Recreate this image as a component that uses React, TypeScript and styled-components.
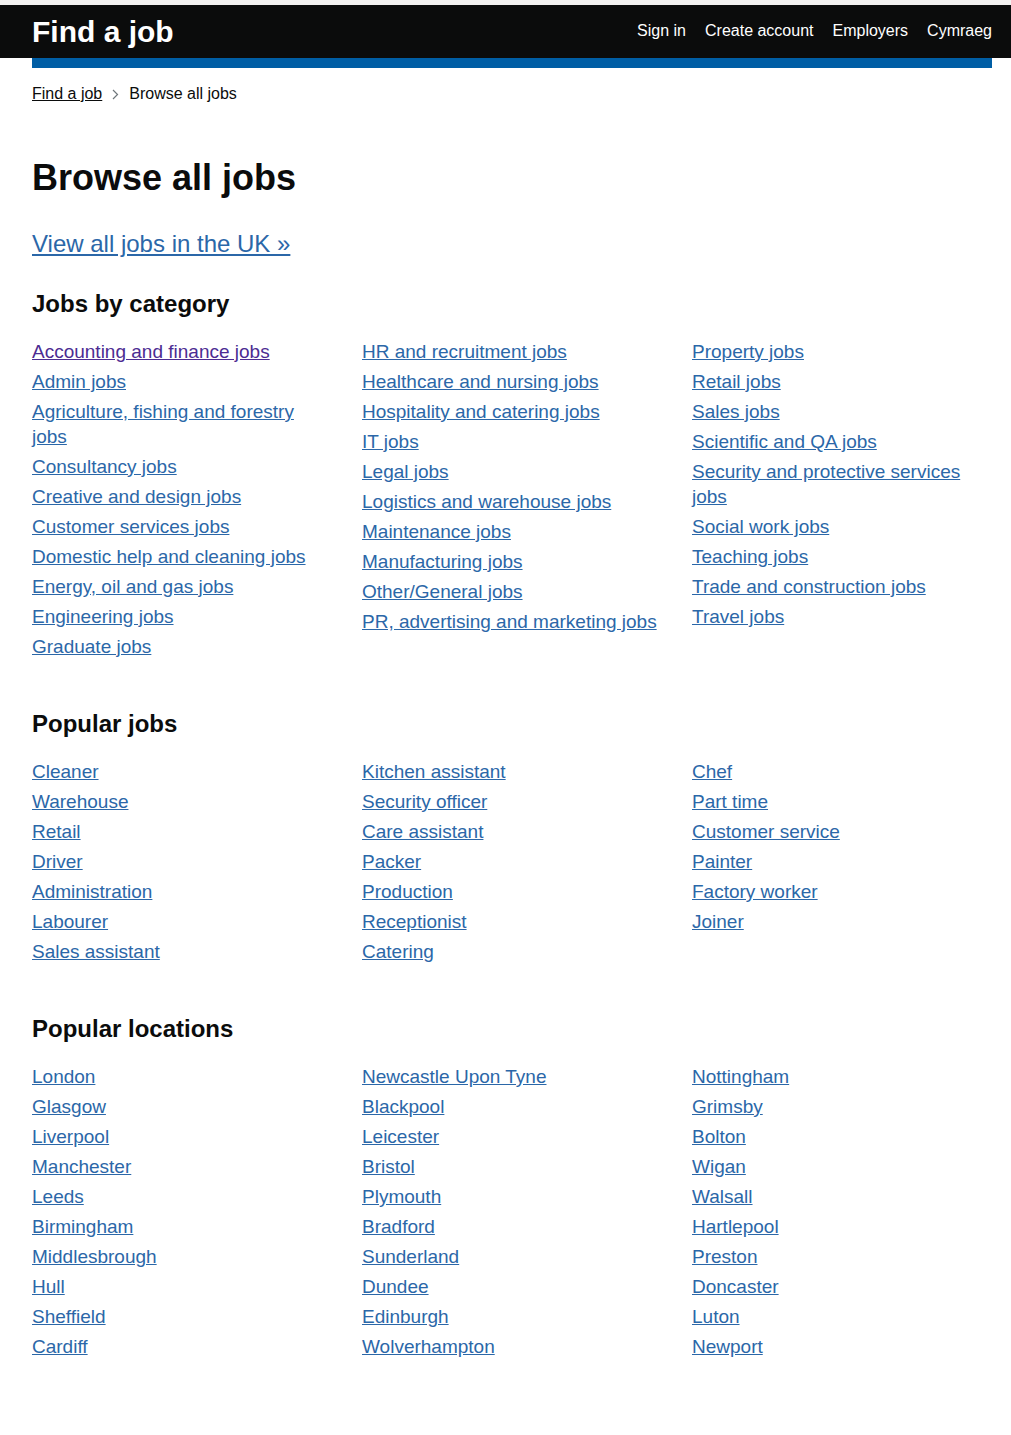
import React from 'react';
import styled, { createGlobalStyle } from 'styled-components';

const categories = [
  [
    'Accounting and finance jobs',
    'Admin jobs',
    'Agriculture, fishing and forestry jobs',
    'Consultancy jobs',
    'Creative and design jobs',
    'Customer services jobs',
    'Domestic help and cleaning jobs',
    'Energy, oil and gas jobs',
    'Engineering jobs',
    'Graduate jobs',
  ],
  [
    'HR and recruitment jobs',
    'Healthcare and nursing jobs',
    'Hospitality and catering jobs',
    'IT jobs',
    'Legal jobs',
    'Logistics and warehouse jobs',
    'Maintenance jobs',
    'Manufacturing jobs',
    'Other/General jobs',
    'PR, advertising and marketing jobs',
  ],
  [
    'Property jobs',
    'Retail jobs',
    'Sales jobs',
    'Scientific and QA jobs',
    'Security and protective services jobs',
    'Social work jobs',
    'Teaching jobs',
    'Trade and construction jobs',
    'Travel jobs',
  ],
];

const popularJobs = [
  ['Cleaner', 'Warehouse', 'Retail', 'Driver', 'Administration', 'Labourer', 'Sales assistant'],
  ['Kitchen assistant', 'Security officer', 'Care assistant', 'Packer', 'Production', 'Receptionist', 'Catering'],
  ['Chef', 'Part time', 'Customer service', 'Painter', 'Factory worker', 'Joiner'],
];

const locations = [
  ['London', 'Glasgow', 'Liverpool', 'Manchester', 'Leeds', 'Birmingham', 'Middlesbrough', 'Hull', 'Sheffield', 'Cardiff'],
  ['Newcastle Upon Tyne', 'Blackpool', 'Leicester', 'Bristol', 'Plymouth', 'Bradford', 'Sunderland', 'Dundee', 'Edinburgh', 'Wolverhampton'],
  ['Nottingham', 'Grimsby', 'Bolton', 'Wigan', 'Walsall', 'Hartlepool', 'Preston', 'Doncaster', 'Luton', 'Newport'],
];

const visited = ['Accounting and finance jobs'];

const LinkSection = ({ title, columns }: { title: string; columns: string[][] }) => (
  <Section>
    <SectionTitle>{title}</SectionTitle>
    <Columns>
      {columns.map((col, i) => (
        <List key={i}>
          {col.map((item) => (
            <Item key={item}>
              <ListLink href="#" $visited={visited.includes(item)}>
                {item}
              </ListLink>
            </Item>
          ))}
        </List>
      ))}
    </Columns>
  </Section>
);

const App = () => {
  return (
    <>
      <GlobalStyle />
      <TopStrip />
      <Header>
        <HeaderInner>
          <Logo href="#">Find a job</Logo>
          <Nav>
            <NavLink href="#">Sign in</NavLink>
            <NavLink href="#">Create account</NavLink>
            <NavLink href="#">Employers</NavLink>
            <NavLink href="#">Cymraeg</NavLink>
          </Nav>
        </HeaderInner>
      </Header>

      <Container>
        <BlueBar />

        <Breadcrumbs>
          <CrumbLink href="#">Find a job</CrumbLink>
          <Chevron>
            <svg width="7" height="11" viewBox="0 0 7 11">
              <path d="M1 1l4.5 4.5L1 10" fill="none" stroke="#6f777b" strokeWidth="1.2" />
            </svg>
          </Chevron>
          <span>Browse all jobs</span>
        </Breadcrumbs>

        <Main>
          <Title>Browse all jobs</Title>
          <ViewAll href="#">View all jobs in the UK »</ViewAll>

          <LinkSection title="Jobs by category" columns={categories} />
          <LinkSection title="Popular jobs" columns={popularJobs} />
          <LinkSection title="Popular locations" columns={locations} />
        </Main>
      </Container>
    </>
  );
};

const GlobalStyle = createGlobalStyle`
  * { box-sizing: border-box; }
  body {
    margin: 0;
    background: #ffffff;
    color: #0b0c0c;
    font-family: "Liberation Sans", Arial, sans-serif;
  }
`;

const TopStrip = styled.div`
  height: 5px;
  background-color: #f3f2f1;
`;

const Header = styled.header`
  background-color: #0b0c0c;
  height: 53px;
`;

const HeaderInner = styled.div`
  width: 960px;
  margin: 0 32px;
  height: 100%;
  display: flex;
  align-items: center;
  justify-content: space-between;
`;

const Logo = styled.a`
  color: #ffffff;
  font-weight: 700;
  font-size: 30px;
  line-height: 30px;
  text-decoration: none;
  margin-top: 1px;
`;

const Nav = styled.nav`
  display: flex;
  gap: 19px;
  margin-top: -2px;
`;

const NavLink = styled.a`
  color: #ffffff;
  font-size: 16px;
  line-height: 20px;
  text-decoration: none;
`;

const Container = styled.div`
  width: 960px;
  margin: 0 32px;
`;

const BlueBar = styled.div`
  height: 10px;
  background-color: #005ea5;
`;

const Breadcrumbs = styled.div`
  margin-top: 16px;
  display: flex;
  align-items: center;
  font-size: 16px;
  line-height: 20px;
  color: #0b0c0c;
`;

const CrumbLink = styled.a`
  color: #0b0c0c;
  text-decoration: underline;
`;

const Chevron = styled.span`
  display: flex;
  align-items: center;
  margin: 0 10px 0 10px;
`;

const Main = styled.main`
  padding-top: 54px;
  padding-bottom: 60px;
`;

const Title = styled.h1`
  margin: 0 0 31px 0;
  font-size: 36px;
  line-height: 40px;
  font-weight: 700;
`;

const ViewAll = styled.a`
  display: inline-block;
  font-size: 24px;
  line-height: 30px;
  color: #2b67a8;
  text-decoration: underline;
  margin-bottom: 30px;
`;

const Section = styled.section`
  margin-bottom: 45px;
`;

const SectionTitle = styled.h2`
  margin: 0 0 20px 0;
  font-size: 24px;
  line-height: 30px;
  font-weight: 700;
`;

const Columns = styled.div`
  display: grid;
  grid-template-columns: repeat(3, 300px);
  column-gap: 30px;
`;

const List = styled.ul`
  list-style: none;
  margin: 0;
  padding: 0;
`;

const Item = styled.li`
  font-size: 19px;
  line-height: 25px;
  margin-bottom: 5px;
`;

const ListLink = styled.a<{ $visited?: boolean }>`
  color: ${(p) => (p.$visited ? '#4c2c92' : '#2b67a8')};
  text-decoration: underline;
`;

export default App;
